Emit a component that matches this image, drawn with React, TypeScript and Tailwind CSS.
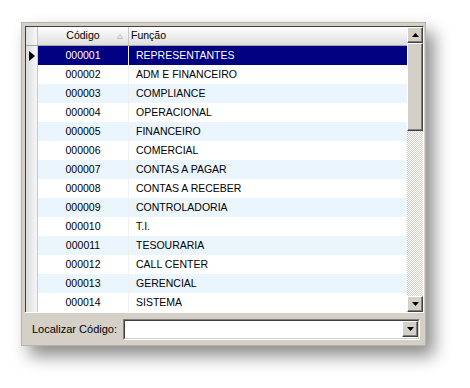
const rows = [
  ["000001", "REPRESENTANTES"],
  ["000002", "ADM E FINANCEIRO"],
  ["000003", "COMPLIANCE"],
  ["000004", "OPERACIONAL"],
  ["000005", "FINANCEIRO"],
  ["000006", "COMERCIAL"],
  ["000007", "CONTAS A PAGAR"],
  ["000008", "CONTAS A RECEBER"],
  ["000009", "CONTROLADORIA"],
  ["000010", "T.I."],
  ["000011", "TESOURARIA"],
  ["000012", "CALL CENTER"],
  ["000013", "GERENCIAL"],
  ["000014", "SISTEMA"],
];

const ArrowButton = (props: { down?: boolean }) =>
  <div className="w-[16px] h-[16px] bg-[#d4d0c8] border border-t-white border-l-white border-r-[#404040] border-b-[#404040] flex items-center justify-center shadow-[inset_-1px_-1px_0_#808080]">
    <svg width="7" height="4" viewBox="0 0 7 4">
      {props.down
        ? <path d="M0 0h7L3.5 4z" fill="#000" />
        : <path d="M3.5 0L7 4H0z" fill="#000" />}
    </svg>
  </div>

const App = () =>
  <div className="w-[470px] h-[388px] bg-white pt-[22px] pl-[21px] font-['Liberation_Sans',Arial,sans-serif] text-[10.5px] text-black">
    <div className="w-[405px] h-[324px] bg-[#d4d0c8] border border-[#b8b4ac] flex flex-col pt-[3px] pl-[3px] pr-[1px] shadow-[8px_10px_16px_rgba(0,0,0,0.45)]">
      {/* grid */}
      <div className="flex border-t border-l border-[#404040] border-r border-r-white h-[286px]">
        <div className="flex-1 flex flex-col">
          {/* header */}
          <div className="flex h-[19px] bg-gradient-to-b from-white to-[#dedede] border-b border-[#a8a8a8]">
            <div className="w-[12px] bg-gradient-to-r from-[#e2e2e2] to-[#f6f6f6] border-r border-[#c8c8c8]"></div>
            <div className="w-[91px] relative flex items-center justify-center border-r border-[#c8c8c8]">
              Código
              <svg className="absolute left-[79px] top-[7px]" width="6" height="5" viewBox="0 0 6 5">
                <path d="M3 0.5L5.5 4.5H0.5z" fill="none" stroke="#b8b8b8" strokeWidth="0.8" />
              </svg>
            </div>
            <div className="flex-1 flex items-center pl-[2px]">Função</div>
          </div>
          {rows.map((r, i) => {
            const sel = i === 0;
            const bg = sel ? "bg-[#000080] text-white" : i % 2 === 0 ? "bg-[#ebf5fe]" : "bg-white";
            return (
              <div key={r[0]} className="flex h-[19px]">
                <div className="w-[12px] bg-gradient-to-r from-[#dcdcdc] to-[#f6f6f6] border-r border-[#c8c8c8] flex items-center justify-center">
                  {sel &&
                    <svg width="6" height="10" viewBox="0 0 6 10"><path d="M0 0L6 5L0 10z" fill="#000" /></svg>}
                </div>
                <div className={`w-[91px] flex items-center justify-center border-r border-[#f0f0f0] ${bg}`}>{r[0]}</div>
                <div className={`flex-1 flex items-center pl-[7px] ${bg}`}>{r[1]}</div>
              </div>
            );
          })}
        </div>
        {/* scrollbar */}
        <div className="w-[16px] flex flex-col bg-[repeating-conic-gradient(#d4d0c8_0_25%,#ffffff_0_50%)] bg-[length:2px_2px]">
          <ArrowButton />
          <div className="h-[88px] bg-[#d4d0c8] border border-t-white border-l-white border-r-[#404040] border-b-[#404040] shadow-[inset_-1px_-1px_0_#808080]"></div>
          <div className="flex-1"></div>
          <ArrowButton down />
        </div>
      </div>
      {/* bottom panel */}
      <div className="flex-1 flex items-center pl-[7px] pr-[4px] border-t border-white">
        <span className="text-[11px] mr-[6px]">Localizar Código:</span>
        <div className="flex-1 h-[21px] bg-white border border-t-[#808080] border-l-[#808080] border-b-white border-r-white">
          <div className="h-full border border-t-[#404040] border-l-[#404040] border-b-[#d4d0c8] border-r-[#d4d0c8] flex items-center justify-end">
            <ArrowButton down />
          </div>
        </div>
      </div>
    </div>
  </div>
export default App;
